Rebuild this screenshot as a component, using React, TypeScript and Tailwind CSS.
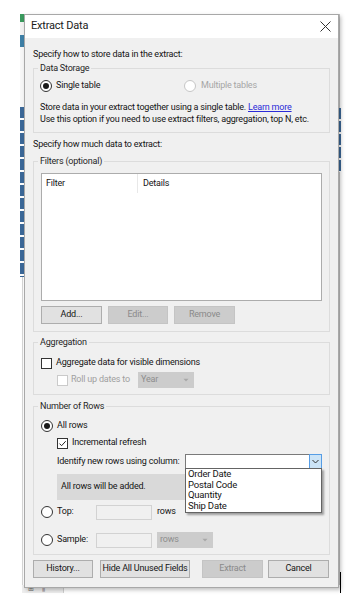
import React from "react";

const FONT = "font-['Roboto',sans-serif]";

function Radio({ checked, disabled }: { checked?: boolean; disabled?: boolean }) {
  return (
    <span
      className={`flex h-[12px] w-[12px] shrink-0 items-center justify-center rounded-full border bg-white ${
        disabled ? "border-[#c6c6c6]" : "border-[#333333]"
      }`}
    >
      {checked && <span className="h-[6px] w-[6px] rounded-full bg-[#1a1a1a]" />}
    </span>
  );
}

function Checkbox({ checked, disabled }: { checked?: boolean; disabled?: boolean }) {
  return (
    <span
      className={`flex h-[11px] w-[11px] shrink-0 items-center justify-center border bg-white ${
        disabled ? "border-[#cacaca]" : "border-[#333333]"
      }`}
    >
      {checked && (
        <svg width="9" height="9" viewBox="0 0 9 9">
          <path d="M1.5 4.6 L3.6 6.7 L7.7 2.2" fill="none" stroke="#222222" strokeWidth="1" />
        </svg>
      )}
    </span>
  );
}

function Group({
  label,
  className,
  children,
}: {
  label: string;
  className?: string;
  children: React.ReactNode;
}) {
  return (
    <div className={`relative border border-[#dcdcdc] ${className ?? ""}`}>
      <span className="absolute -top-[7px] left-[4px] whitespace-nowrap bg-[#f0f0f0] px-[2px] leading-[12px] text-[#262626]">
        {label}
      </span>
      {children}
    </div>
  );
}

function Btn({
  children,
  disabled,
  className,
}: {
  children: React.ReactNode;
  disabled?: boolean;
  className?: string;
}) {
  return (
    <div
      className={`flex h-[18px] items-center justify-center whitespace-nowrap border ${
        disabled
          ? "border-[#c4c4c4] bg-[#cccccc] text-[#8a8a8a]"
          : "border-[#adadad] bg-[#e1e1e1] text-[#141414]"
      } ${className ?? ""}`}
    >
      {children}
    </div>
  );
}

function GrayArrow() {
  return (
    <svg width="6" height="4" viewBox="0 0 6 4">
      <path d="M0.5 0.8 L5.5 0.8 L3 3.4 Z" fill="#a8a8a8" />
    </svg>
  );
}

function GraySelect({ value }: { value: string }) {
  return (
    <div className="flex h-[16px] w-[56px] items-center justify-between bg-[#cccccc] pl-[3px] pr-[5px] text-[#8e8e8e]">
      <span>{value}</span>
      <GrayArrow />
    </div>
  );
}

export default function App() {
  return (
    <div
      className={`relative h-[607px] w-[357px] overflow-hidden whitespace-nowrap bg-white text-[9px] tracking-[-0.2px] text-[#141414] ${FONT}`}
    >
      {/* background application windows */}
      <div className="absolute left-[20px] top-[14px] h-[8px] w-[4px] bg-[#3a9a5e]" />
      <div className="absolute left-[20px] top-[22px] h-[13px] w-[4px] bg-[#f2f2f2]" />
      <div className="absolute left-[20px] top-[35px] h-[12px] w-[4px] bg-[#3d7fa6]" />
      <div className="absolute left-[20px] top-[47px] h-[60px] w-[4px] bg-[#f7f7f7]" />
      <div className="absolute left-[20px] top-[107px] h-[170px] w-[4px] bg-[repeating-linear-gradient(to_bottom,#3b6898_0px,#3b6898_11px,#ffffff_11px,#ffffff_13px)]" />
      <div className="absolute left-[22px] top-[277px] h-[316px] w-[1px] bg-[#d6d6d6]" />
      <div className="absolute left-[339px] top-[14px] h-[571px] w-[1px] bg-[#c4c4c4]" />
      <div className="absolute left-[339px] top-[108px] h-[64px] w-[2px] bg-[repeating-linear-gradient(to_bottom,#3b6898_0px,#3b6898_11px,#ffffff_11px,#ffffff_13px)]" />
      <div className="absolute left-[340px] top-[572px] h-[21px] w-[1px] bg-black" />
      <div className="absolute left-[22px] top-[585px] flex h-[8px] w-[42px] items-end gap-[8px] border-r border-[#d0d0d0] bg-[#eeeeee] pl-[6px] text-[7px] leading-[8px] text-[#707070]">
        <span>⊞</span>
        <span>⫼</span>
      </div>

      {/* dialog */}
      <div className="absolute left-[24px] top-[14px] w-[315px] border border-[#a8a8a8] bg-[#f0f0f0] shadow-[2px_2px_4px_rgba(0,0,0,0.25)]">
        {/* title bar */}
        <div className="flex h-[23px] items-center justify-between bg-white pl-[6px] pr-[7px]">
          <span className="text-[11px] text-[#1a1a1a]">Extract Data</span>
          <svg width="11" height="11" viewBox="0 0 11 11">
            <path d="M0.5 0.5 L10.5 10.5 M10.5 0.5 L0.5 10.5" stroke="#333333" strokeWidth="1" />
          </svg>
        </div>

        {/* body */}
        <div className="flex flex-col px-[8px] pb-[9px]">
          <div className="mt-[9px] h-[14px] leading-[14px]">Specify how to store data in the extract:</div>

          <Group label="Data Storage" className="mt-[7px] pl-[6px] pr-[6px] pb-[7px] pt-[10px]">
            <div className="flex h-[14px] items-center">
              <div className="flex w-[144px] items-center gap-[4px]">
                <Radio checked />
                <span>Single table</span>
              </div>
              <div className="flex items-center gap-[5px] text-[#a6a6a6]">
                <Radio disabled />
                <span>Multiple tables</span>
              </div>
            </div>
            <div className="mt-[8px] h-[12px] leading-[12px]">
              Store data in your extract together using a single table.{" "}
              <span className="text-[#2b2bd8] underline">Learn more</span>
            </div>
            <div className="h-[12px] leading-[12px]">
              Use this option if you need to use extract filters, aggregation, top N, etc.
            </div>
          </Group>

          <div className="mt-[4px] h-[14px] leading-[14px]">Specify how much data to extract:</div>

          <Group label="Filters (optional)" className="mt-[10px] px-[7px] pb-[7px] pt-[11px]">
            <div className="h-[128px] border border-[#acacac] bg-white">
              <div className="flex h-[19px]">
                <div className="flex w-[96px] items-center border-r border-[#e8e8e8] pl-[4px]">Filter</div>
                <div className="flex items-center pl-[5px]">Details</div>
              </div>
            </div>
            <div className="mt-[5px] flex gap-[6px]">
              <Btn className="w-[61px]">Add...</Btn>
              <Btn disabled className="w-[60px]">
                Edit...
              </Btn>
              <Btn disabled className="w-[61px]">
                Remove
              </Btn>
            </div>
          </Group>

          <Group label="Aggregation" className="mt-[10px] px-[7px] pb-[6px] pt-[13px]">
            <div className="flex h-[14px] items-center gap-[4px]">
              <Checkbox />
              <span>Aggregate data for visible dimensions</span>
            </div>
            <div className="mt-[2px] flex h-[16px] items-center pl-[16px]">
              <Checkbox disabled />
              <span className="ml-[3px] w-[67px] text-[#a0a0a0]">Roll up dates to</span>
              <GraySelect value="Year" />
            </div>
          </Group>

          <Group label="Number of Rows" className="mt-[11px] px-[7px] pb-[6px] pt-[12px]">
            <div className="flex h-[14px] items-center gap-[4px]">
              <Radio checked />
              <span>All rows</span>
            </div>
            <div className="mt-[3px] flex h-[14px] items-center gap-[4px] pl-[16px]">
              <Checkbox checked />
              <span>Incremental refresh</span>
            </div>
            <div className="mt-[4px] flex h-[15px] items-center pl-[16px]">
              <span>Identify new rows using column:</span>
              <div className="relative ml-auto h-[15px] w-[137px] shrink-0">
                <div className="flex h-full border border-[#7a7a7a] bg-white">
                  <div className="flex-1" />
                  <div className="-my-[1px] -mr-[1px] flex w-[13px] items-center justify-center border border-[#569de5] bg-[#cce4f7]">
                    <svg width="7" height="5" viewBox="0 0 7 5">
                      <path d="M0.5 1 L3.5 4 L6.5 1" fill="none" stroke="#333333" strokeWidth="1" />
                    </svg>
                  </div>
                </div>
                <div className="absolute left-0 top-[14px] z-10 w-[137px] border border-[#646464] bg-white pb-[1px] pl-[2px] shadow-[2px_2px_2px_rgba(0,0,0,0.35)]">
                  {["Order Date", "Postal Code", "Quantity", "Ship Date"].map((o) => (
                    <div key={o} className="h-[10.5px] text-[9.5px] leading-[10.5px] text-[#141414]">
                      {o}
                    </div>
                  ))}
                </div>
              </div>
            </div>
            <div className="ml-[16px] mt-[5px] flex h-[26px] items-center bg-[#d9d9d9] pl-[4px]">
              All rows will be added.
            </div>
            <div className="mt-[4px] flex h-[16px] items-center">
              <Radio />
              <span className="ml-[4px] w-[39px]">Top:</span>
              <div className="h-[15px] w-[56px] border border-[#d2d2d2] bg-[#f0f0f0]" />
              <span className="ml-[5px]">rows</span>
            </div>
            <div className="mt-[12px] flex h-[16px] items-center">
              <Radio />
              <span className="ml-[4px] w-[39px]">Sample:</span>
              <div className="h-[15px] w-[56px] border border-[#d2d2d2] bg-[#f0f0f0]" />
              <div className="ml-[5px]">
                <GraySelect value="rows" />
              </div>
            </div>
          </Group>

          <div className="mt-[5px] flex">
            <Btn className="w-[60px]">History...</Btn>
            <Btn className="ml-[7px] w-[90px]">Hide All Unused Fields</Btn>
            <Btn disabled className="ml-[12px] w-[61px]">
              Extract
            </Btn>
            <Btn className="ml-[5px] w-[61px]">Cancel</Btn>
          </div>
        </div>
      </div>
    </div>
  );
}
